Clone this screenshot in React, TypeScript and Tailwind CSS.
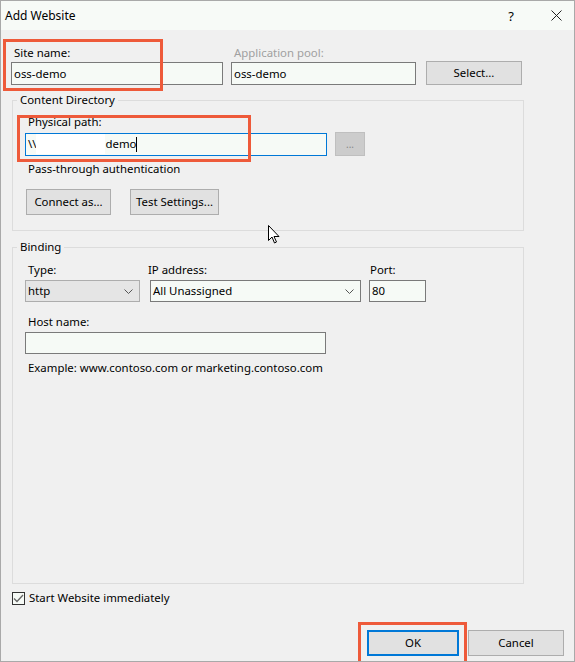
import React from 'react';

const font = { fontFamily: '"Noto Sans", "Liberation Sans", sans-serif' };

function Chevron() {
  return (
    <svg width="9" height="5" viewBox="0 0 9 5" className="text-[#555]">
      <path d="M0.5 0.5 L4.5 4.5 L8.5 0.5" fill="none" stroke="currentColor" strokeWidth="1" />
    </svg>
  );
}

function Button({ label, className = '' }: { label: string; className?: string }) {
  return (
    <div
      className={`flex items-center justify-center bg-[#e1e1e1] border border-[#adadad] text-black ${className}`}
    >
      {label}
    </div>
  );
}

export default function App() {
  return (
    <div
      style={font}
      className="relative w-[575px] h-[662px] overflow-hidden bg-[#f0f0f0] border border-[#a9a9a9] text-[11.4px] leading-[16px] text-black"
    >
      {/* Title bar */}
      <div className="h-[29px] bg-[#f7faf7] flex items-center pl-[4px]">
        <span className="text-[12px]">Add Website</span>
        <span className="ml-auto mr-[37px] text-[13px]">?</span>
        <svg width="11" height="11" viewBox="0 0 11 11" className="mr-[12px]">
          <path d="M0.5 0.5 L10.5 10.5 M10.5 0.5 L0.5 10.5" stroke="#222" strokeWidth="1" />
        </svg>
      </div>

      <div className="flex flex-col pl-[10px] pr-[10px]">
        {/* Site name row */}
        <div className="flex items-end mt-[15px]">
          <div className="flex flex-col w-[212px]">
            <span className="pl-[3px]">Site name:</span>
            <div className="mt-[1px] h-[23px] bg-[#f6faf6] border border-[#7a7a7a] flex items-center pl-[2px]">
              oss-demo
            </div>
          </div>
          <div className="flex flex-col w-[185px] ml-[8px]">
            <span className="pl-[3px] text-[#a0a0a0]">Application pool:</span>
            <div className="mt-[1px] h-[23px] bg-[#f6faf6] border border-[#7a7a7a] flex items-center pl-[2px]">
              oss-demo
            </div>
          </div>
          <Button label="Select..." className="ml-[10px] w-[96px] h-[24px]" />
        </div>

        {/* Content Directory */}
        <fieldset className="mt-[7px] ml-[1px] w-[512px] border border-[#dcdcdc] pl-[12px] pb-[15px]">
          <legend className="-ml-[8px] px-[3px]">Content Directory</legend>
          <span className="block mt-[6px] pl-[3px]">Physical path:</span>
          <div className="flex items-center mt-[2px]">
            <div className="w-[302px] h-[23px] bg-[#f6faf6] border border-[#0078d7] flex items-center pl-[2px]">
              <span>\\</span>
              <span className="inline-block w-[69px] h-[20px] bg-white" />
              <span>demo</span>
              <span className="inline-block w-[1px] h-[15px] bg-black" />
            </div>
            <div className="ml-[8px] w-[30px] h-[24px] bg-[#cccccc] border border-[#bfbfbf] flex items-center justify-center text-[#888] text-[10px]">
              ...
            </div>
          </div>
          <span className="block mt-[5px] pl-[3px]">Pass-through authentication</span>
          <div className="flex mt-[12px]">
            <Button label="Connect as..." className="ml-[1px] w-[85px] h-[26px]" />
            <Button label="Test Settings..." className="ml-[19px] w-[89px] h-[26px]" />
          </div>
        </fieldset>

        {/* Binding */}
        <fieldset className="mt-[8px] ml-[1px] w-[512px] h-[345px] border border-[#dcdcdc] pl-[12px]">
          <legend className="-ml-[8px] px-[3px]">Binding</legend>
          <div className="flex mt-[7px]">
            <div className="flex flex-col w-[115px]">
              <span className="pl-[3px]">Type:</span>
              <div className="mt-[2px] h-[22px] bg-[#e5e5e5] border border-[#adadad] flex items-center pl-[2px] pr-[6px]">
                <span>http</span>
                <span className="ml-auto">
                  <Chevron />
                </span>
              </div>
            </div>
            <div className="flex flex-col w-[211px] ml-[10px]">
              <span className="-ml-[2px]">IP address:</span>
              <div className="mt-[2px] h-[22px] bg-[#f6faf6] border border-[#7a7a7a] flex items-center pl-[2px] pr-[6px]">
                <span>All Unassigned</span>
                <span className="ml-auto">
                  <Chevron />
                </span>
              </div>
            </div>
            <div className="flex flex-col w-[57px] ml-[8px]">
              <span className="pl-[1px]">Port:</span>
              <div className="mt-[2px] h-[22px] bg-[#f6faf6] border border-[#7a7a7a] flex items-center pl-[2px]">
                80
              </div>
            </div>
          </div>
          <span className="block mt-[12px] pl-[3px]">Host name:</span>
          <div className="mt-[2px] w-[301px] h-[22px] bg-[#f6faf6] border border-[#7a7a7a]" />
          <span className="block mt-[6px] pl-[3px]">Example: www.contoso.com or marketing.contoso.com</span>
        </fieldset>

        {/* Start website */}
        <div className="flex items-center mt-[6px] ml-[1px]">
          <div className="w-[13px] h-[13px] border border-[#333] bg-[#f6faf6] flex items-center justify-center">
            <svg width="11" height="9" viewBox="0 0 11 9">
              <path d="M1 4.5 L4 7.5 L10 1" fill="none" stroke="#666" strokeWidth="1.3" />
            </svg>
          </div>
          <span className="ml-[4px]">Start Website immediately</span>
        </div>

        {/* Buttons */}
        <div className="flex justify-end mt-[24px]">
          <Button label="OK" className="w-[92px] h-[26px] !border-[#0078d7] border-2" />
          <Button label="Cancel" className="ml-[9px] w-[96px] h-[26px]" />
        </div>
      </div>

      {/* Annotation boxes */}
      <div className="absolute left-[2px] top-[38px] w-[160px] h-[52px] border-[3px] border-[#ee5a3a]" />
      <div className="absolute left-[16px] top-[114px] w-[234px] h-[47px] border-[3px] border-[#ee5a3a]" />
      <div className="absolute left-[357px] top-[621px] w-[109px] h-[46px] border-[3px] border-[#ee5a3a]" />

      {/* Mouse cursor */}
      <svg className="absolute left-[267px] top-[224px]" width="13" height="20" viewBox="0 0 13 20">
        <path
          d="M0.5 0.5 L0.5 15.5 L4 12 L6.5 18 L8.5 17 L6 11.5 L11 11.5 Z"
          fill="#fff"
          stroke="#000"
          strokeWidth="1"
          strokeLinejoin="round"
        />
      </svg>
    </div>
  );
}
